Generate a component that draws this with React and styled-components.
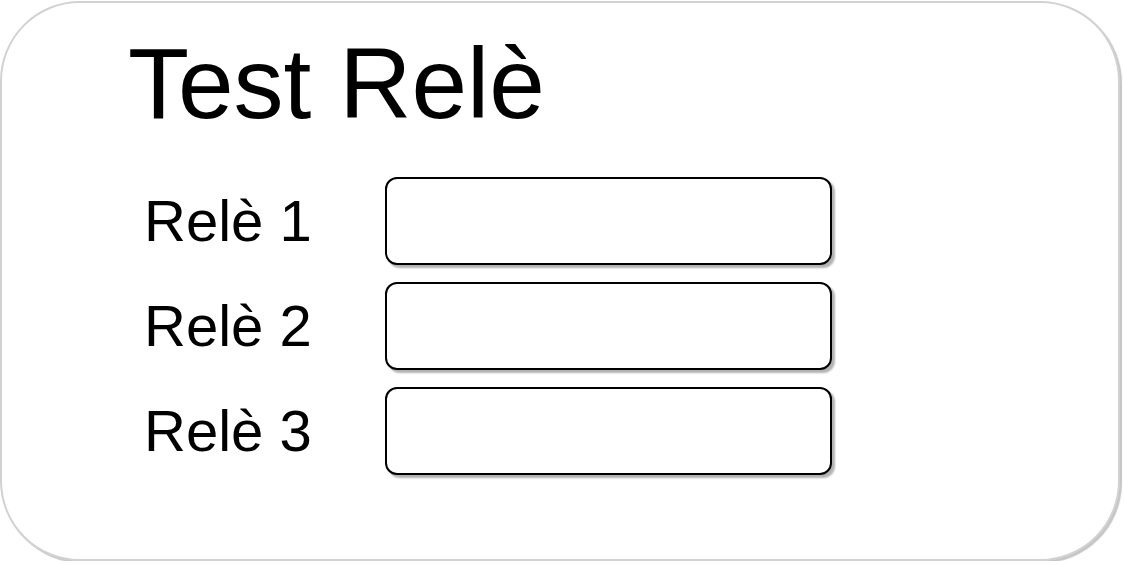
import React from 'react'
import styled, { createGlobalStyle } from 'styled-components'

const Global = createGlobalStyle`
    html, body {
        margin: 0;
        padding: 0;
        background: #ffffff;
    }
    * {
        box-sizing: border-box;
    }
`

const Card = styled.div`
    width: 1120px;
    height: 560px;
    margin: 1px 0 0 0;
    padding: 29px 0 0 126px;
    background: #ffffff;
    border: 2px solid #d2d2d2;
    border-radius: 80px;
    box-shadow: 2px 2px 1px #c6c6c6;
    font-family: "Liberation Sans", Arial, sans-serif;
    color: #000000;
`

const Title = styled.h1`
    margin: 0;
    font-size: 100px;
    font-weight: normal;
    line-height: 102px;
`

const Rows = styled.div`
    display: grid;
    grid-template-columns: 243px 447px;
    grid-auto-rows: 88px;
    row-gap: 17px;
    margin: 43px 0 0 14px;
`

const Label = styled.span`
    align-self: center;
    padding-left: 2px;
    font-size: 58px;
    line-height: 58px;
`

const Field = styled.div`
    border: 2px solid #000000;
    border-radius: 12px;
    background: #ffffff;
    box-shadow: 3px 3px 2px rgba(0, 0, 0, 0.3);
`

const relays = ['Relè 1', 'Relè 2', 'Relè 3']

export default function App(){
    return(
        <>
            <Global />
            <Card>
                <Title>Test Relè</Title>
                <Rows>
                    {relays.map((name) => (
                        <React.Fragment key={name}>
                            <Label>{name}</Label>
                            <Field />
                        </React.Fragment>
                    ))}
                </Rows>
            </Card>
        </>
    )
}
